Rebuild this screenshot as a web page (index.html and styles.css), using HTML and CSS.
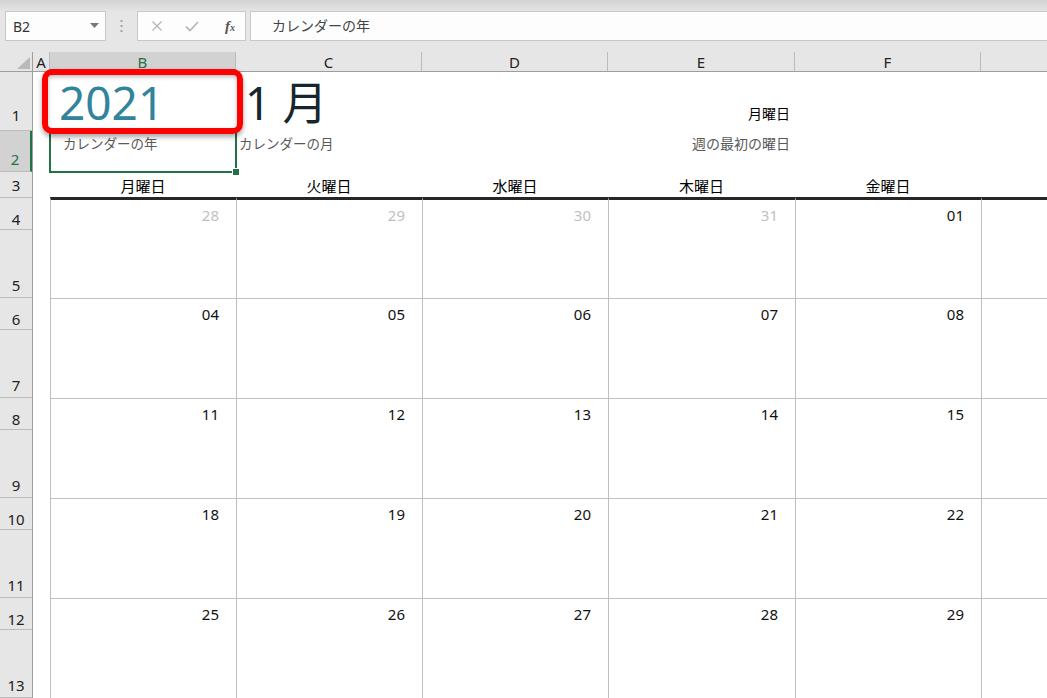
FILE: index.html
```html
<!DOCTYPE html>
<html lang="ja">
<head>
  <meta charset="UTF-8">
  <title>カレンダー</title>
  <link rel="stylesheet" href="styles.css">
</head>
<body>
  <div class="page">
    <div class="topstrip"></div>
    <div class="formula-bar">
      <div class="name-box">
        <span>B2</span>
        <svg class="caret" width="9" height="5" viewBox="0 0 9 5"><path d="M0 0h9L4.5 5z" fill="#777"/></svg>
      </div>
      <div class="grip">
        <svg width="3" height="13" viewBox="0 0 3 13"><rect x="0.5" y="0" width="2" height="2" fill="#a5a5a5"/><rect x="0.5" y="5" width="2" height="2" fill="#a5a5a5"/><rect x="0.5" y="10" width="2" height="2" fill="#a5a5a5"/></svg>
      </div>
      <div class="fx-box">
        <svg width="12" height="12" viewBox="0 0 12 12"><path d="M1.5 1.5l9 9M10.5 1.5l-9 9" stroke="#b4b4b4" stroke-width="1.3" fill="none"/></svg>
        <svg width="14" height="12" viewBox="0 0 14 12"><path d="M1 6.5l4 4L13 2" stroke="#b4b4b4" stroke-width="1.6" fill="none"/></svg>
        <span class="fx">f<small>x</small></span>
      </div>
      <div class="formula-input">カレンダーの年</div>
    </div>

    <div class="sheet">
      <div class="corner">
        <svg width="33" height="20" viewBox="0 0 33 20"><path d="M17 17H30V5z" fill="#b9b9b9"/></svg>
      </div>
      <div class="col-heads">
        <div class="ch col-a">A</div>
        <div class="ch col-w sel">B</div>
        <div class="ch col-w">C</div>
        <div class="ch col-w">D</div>
        <div class="ch col-e">E</div>
        <div class="ch col-w">F</div>
        <div class="ch col-g"></div>
      </div>

      <div class="row-heads">
        <div class="rh h59">1</div>
        <div class="rh h41 sel">2</div>
        <div class="rh h26">3</div>
        <div class="rh h32">4</div>
        <div class="rh h68">5</div>
        <div class="rh h32">6</div>
        <div class="rh h68">7</div>
        <div class="rh h32">8</div>
        <div class="rh h68">9</div>
        <div class="rh h32">10</div>
        <div class="rh h68">11</div>
        <div class="rh h32">12</div>
        <div class="rh h68">13</div>
      </div>

      <div class="cells">
        <div class="row row1">
          <div></div>
          <div class="year">2021</div>
          <div class="month">1 月</div>
          <div></div>
          <div class="right-text strong">月曜日</div>
          <div></div>
          <div></div>
        </div>
        <div class="row row2">
          <div></div>
          <div class="label indent">カレンダーの年</div>
          <div class="label nudge">カレンダーの月</div>
          <div></div>
          <div class="label wide right-text">週の最初の曜日</div>
          <div></div>
          <div></div>
        </div>
        <div class="row row3">
          <div></div>
          <div class="dow">月曜日</div>
          <div class="dow">火曜日</div>
          <div class="dow">水曜日</div>
          <div class="dow">木曜日</div>
          <div class="dow">金曜日</div>
          <div></div>
        </div>

        <div class="row week first">
          <div class="blank"></div>
          <div class="day muted">28</div>
          <div class="day muted">29</div>
          <div class="day muted">30</div>
          <div class="day muted">31</div>
          <div class="day">01</div>
          <div class="day"></div>
        </div>
        <div class="row week">
          <div class="blank"></div>
          <div class="day">04</div>
          <div class="day">05</div>
          <div class="day">06</div>
          <div class="day">07</div>
          <div class="day">08</div>
          <div class="day"></div>
        </div>
        <div class="row week">
          <div class="blank"></div>
          <div class="day">11</div>
          <div class="day">12</div>
          <div class="day">13</div>
          <div class="day">14</div>
          <div class="day">15</div>
          <div class="day"></div>
        </div>
        <div class="row week">
          <div class="blank"></div>
          <div class="day">18</div>
          <div class="day">19</div>
          <div class="day">20</div>
          <div class="day">21</div>
          <div class="day">22</div>
          <div class="day"></div>
        </div>
        <div class="row week">
          <div class="blank"></div>
          <div class="day">25</div>
          <div class="day">26</div>
          <div class="day">27</div>
          <div class="day">28</div>
          <div class="day">29</div>
          <div class="day"></div>
        </div>
      </div>
    </div>

    <!-- overlays -->
    <div class="selection"><span class="handle"></span></div>
    <div class="highlight"></div>
  </div>
</body>
</html>
```

FILE: styles.css
```css
body {
  margin: 0;
  font-family: "Noto Sans", "Noto Sans CJK JP", sans-serif;
  background: #e6e6e6;
  overflow: hidden;
}
.page {
  position: relative;
  width: 1047px;
  height: 698px;
  overflow: hidden;
}
.topstrip {
  height: 11px;
  background: linear-gradient(#d2d2d2, #e4e4e4);
}
.formula-bar {
  display: flex;
  align-items: center;
  height: 30px;
  background: #e6e6e6;
}
.name-box {
  box-sizing: border-box;
  width: 101px;
  height: 30px;
  margin-left: 5px;
  border: 1px solid #c8c8c8;
  background: #fdfdfd;
  display: flex;
  align-items: center;
  justify-content: space-between;
  padding: 0 6px 0 7px;
  font-size: 14px;
  color: #333;
}
.caret {
  margin-bottom: 2px;
}
.grip {
  width: 31px;
  display: flex;
  justify-content: center;
  padding-top: 1px;
}
.fx-box {
  box-sizing: border-box;
  width: 109px;
  height: 30px;
  border: 1px solid #c8c8c8;
  background: #fdfdfd;
  display: flex;
  align-items: center;
  gap: 22px;
  padding-left: 13px;
}
.fx {
  font-family: "Liberation Serif", serif;
  font-style: italic;
  font-weight: bold;
  font-size: 15px;
  color: #555;
  margin-left: 4px;
}
.fx small {
  font-size: 10px;
}
.formula-input {
  box-sizing: border-box;
  flex: 1;
  height: 30px;
  margin-left: 4px;
  border: 1px solid #c8c8c8;
  border-right: none;
  background: #fdfdfd;
  padding-left: 21px;
  line-height: 27px;
  font-size: 14px;
  color: #444;
}

/* sheet */
.sheet {
  margin-top: 11px;
  display: grid;
  grid-template-columns: 33px 1fr;
  grid-template-rows: 20px 1fr;
}
.corner {
  box-sizing: border-box;
  border-right: 1px solid #9e9e9e;
  border-bottom: 1px solid #9e9e9e;
  background: #e6e6e6;
}
.corner svg {
  display: block;
}
.col-heads {
  display: flex;
  border-bottom: 1px solid #9e9e9e;
  height: 19px;
  background: #e6e6e6;
}
.ch {
  box-sizing: border-box;
  border-right: 1px solid #bcbcbc;
  text-align: center;
  font-size: 15px;
  line-height: 21px;
  color: #222;
}
.col-a { width: 17px; }
.col-w { width: 186px; }
.col-e { width: 187px; }
.col-g { flex: 1; border-right: none; }
.ch.sel {
  background: #d2d2d2;
  color: #217346;
  border-bottom: 2px solid #217346;
}

.row-heads {
  background: #e6e6e6;
  border-right: 1px solid #9e9e9e;
}
.rh {
  box-sizing: border-box;
  border-bottom: 1px solid #bcbcbc;
  display: flex;
  align-items: flex-end;
  justify-content: center;
  padding-bottom: 2px;
  font-size: 15px;
  color: #222;
}
.rh.sel {
  background: #d2d2d2;
  color: #217346;
  border-right: 2px solid #217346;
}
.h59 { height: 59px; padding-bottom: 5px; }
.h41 { height: 41px; }
.h26 { height: 26px; }
.h32 { height: 32px; padding-bottom: 0; }
.h68 { height: 68px; }

.cells {
  background: #fff;
}
.row {
  display: grid;
  grid-template-columns: 17px 186px 186px 186px 187px 186px 1fr;
}
.row > div {
  min-width: 0;
  white-space: nowrap;
}
.row1 {
  height: 59px;
  align-items: end;
}
.year {
  font-size: 46px;
  line-height: 1;
  color: #31849b;
  padding-left: 9px;
  padding-bottom: 6px;
}
.month {
  font-size: 45px;
  line-height: 1;
  color: #17262c;
  padding-left: 9px;
  padding-bottom: 6px;
}
.right-text {
  text-align: right;
  padding-right: 5px;
}
.strong {
  font-size: 14px;
  color: #000;
  padding-bottom: 8px;
}
.row2 {
  height: 41px;
}
.label {
  font-size: 13.5px;
  color: #595959;
  padding-top: 2px;
  overflow: visible;
}
.label.indent {
  padding-left: 13px;
}
.label.nudge {
  padding-left: 3px;
}
.label.wide {
  font-size: 14px;
}
.row3 {
  height: 25px;
  align-items: end;
}
.dow {
  text-align: center;
  font-size: 15px;
  color: #000;
  line-height: 22px;
}
.week {
  height: 100px;
}
.week.first {
  height: 102px;
}
.week .day {
  box-sizing: border-box;
  border-left: 1px solid #bfbfbf;
  border-bottom: 1px solid #bfbfbf;
  text-align: right;
  padding: 5px 17px 0 0;
  font-size: 15px;
  color: #111;
}
.week.first .day {
  border-top: 3px solid #262626;
}
.day.muted {
  color: #bfbfbf;
}

/* overlays */
.selection {
  position: absolute;
  left: 49px;
  top: 130px;
  width: 184px;
  height: 39px;
  border: 2px solid #217346;
}
.handle {
  position: absolute;
  right: -5px;
  bottom: -5px;
  width: 6px;
  height: 6px;
  background: #217346;
  border: 1px solid #fff;
}
.highlight {
  position: absolute;
  left: 42px;
  top: 69px;
  width: 189px;
  height: 53px;
  border: 6px solid #ff0000;
  border-radius: 10px;
  box-shadow: 0 3px 5px rgba(0, 0, 0, 0.35), inset 0 2px 4px rgba(0, 0, 0, 0.25);
}
```
